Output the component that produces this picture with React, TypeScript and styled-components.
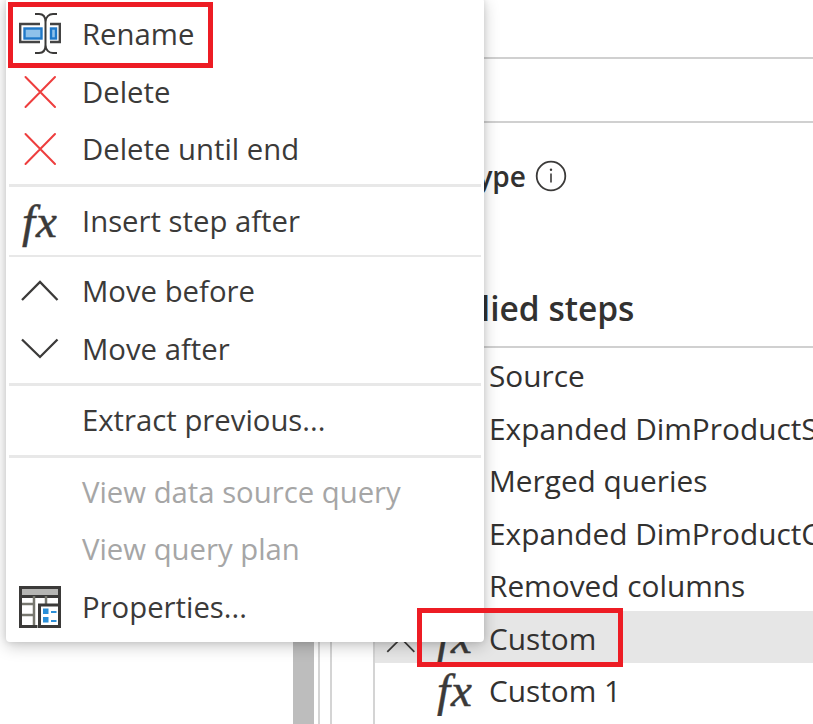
import React from "react";
import styled, { createGlobalStyle } from "styled-components";

const Global = createGlobalStyle`
  html, body { margin: 0; padding: 0; background: #fff; overflow: hidden; }
  body { font-family: "Open Sans", "Noto Sans", "Liberation Sans", sans-serif; }
`;
const Page = styled.div`
  position: relative;
  width: 813px;
  height: 724px;
  overflow: hidden;
  display: flex;
  background: #fff;
`;
const LeftSpace = styled.div`width: 293px; flex: none;`;
const Scrollbar = styled.div`width: 21px; flex: none; background: #bdbdbd;`;
const Rail = styled.div`
  width: 10px;
  flex: none;
  margin-left: 4px;
  border-left: 2px solid #d4d4d4;
  border-right: 2px solid #d4d4d4;
`;
const Settings = styled.div`
  flex: 1;
  min-width: 0;
  margin-left: 41px;
  border-left: 2px solid #d4d4d4;
  display: flex;
  flex-direction: column;
`;
const Band = styled.div<{ $h: number }>`
  height: ${p => p.$h}px;
  flex: none;
  box-sizing: border-box;
  border-bottom: 2px solid #d0d0d0;
`;
const TypeBand = styled.div`
  height: 225px;
  flex: none;
  box-sizing: border-box;
  border-bottom: 2px solid #d0d0d0;
  padding-left: 1px;
  color: #323130;
`;
const TypeLine = styled.div`
  display: flex;
  align-items: center;
  gap: 9px;
  height: 32px;
  margin-top: 37px;
  font-size: 28px;
  font-weight: 600;
`;
const Heading = styled.div`
  margin-top: 96px;
  margin-left: 41px;
  height: 40px;
  line-height: 40px;
  font-size: 33.5px;
  font-weight: 600;
  white-space: nowrap;
`;
const Step = styled.div<{ $selected?: boolean }>`
  height: 52.5px;
  flex: none;
  box-sizing: border-box;
  display: flex;
  align-items: center;
  padding: 3px 0 0 10px;
  background: ${p => (p.$selected ? "#e6e6e6" : "transparent")};
  color: #323130;
  font-size: 29.8px;
  white-space: nowrap;
  overflow: hidden;
`;
const StepChevron = styled.div`width: 32px; flex: none; display: flex; padding-top: 13px;`;
const StepFx = styled.div`
  width: 72px;
  flex: none;
  padding: 0 0 2px 20px;
  box-sizing: border-box;
  font-family: "Liberation Serif", serif;
  font-style: italic;
  font-size: 47px;
  line-height: 42px;
  letter-spacing: 1px;
  -webkit-text-stroke: 0.5px #3b3a39;
  color: #3b3a39;
`;
const Menu = styled.div`
  position: absolute;
  left: 6px;
  top: -2px;
  width: 478px;
  height: 644px;
  box-sizing: border-box;
  padding-top: 7px;
  background: #fff;
  border-radius: 4px;
  box-shadow: 0 4px 16px rgba(0, 0, 0, 0.22), 0 0 6px rgba(0, 0, 0, 0.1);
`;
const Item = styled.div<{ $disabled?: boolean }>`
  height: 57.8px;
  display: flex;
  align-items: center;
  padding-left: 13px;
  color: ${p => (p.$disabled ? "#a6a6a6" : "#3b3a39")};
  font-size: 29.3px;
  white-space: nowrap;
`;
const IconSlot = styled.div`
  width: 42px;
  height: 42px;
  flex: none;
  margin-right: 21px;
  display: flex;
  align-items: center;
  justify-content: center;
`;
const MenuFx = styled.span`
  font-family: "Liberation Serif", serif;
  font-style: italic;
  font-size: 47px;
  line-height: 42px;
  letter-spacing: 1px;
  -webkit-text-stroke: 0.5px #3b3a39;
  color: #3b3a39;
`;
const Divider = styled.div<{ $w?: number }>`
  height: ${p => p.$w ?? 3}px;
  margin: ${p => (p.$w ? 5 : 5.2)}px 3px ${p => (p.$w ? 6 : 5.2)}px 3px;
  background: #e8e8e8;
`;
const Highlight = styled.div<{ $l: number; $t: number; $w: number; $h: number }>`
  position: absolute;
  left: ${p => p.$l}px;
  top: ${p => p.$t}px;
  width: ${p => p.$w}px;
  height: ${p => p.$h}px;
  box-sizing: border-box;
  border: 5px solid #ed1c24;
`;

const RenameIcon = () => (
  <svg width="42" height="42" viewBox="0 0 42 42" fill="none">
    <path d="M21 11H1.200v18H21" stroke="#444" strokeWidth="2.400" />
    <path d="M31 11h9.800v18H31" stroke="#444" strokeWidth="2.400" />
    <rect x="5.500" y="15.500" width="17" height="10" fill="#8ec1ea" stroke="#1f78c8" strokeWidth="2.400" />
    <rect x="32" y="15.500" width="5" height="10" fill="#8ec1ea" stroke="#1f78c8" strokeWidth="2.400" />
    <path d="M16 1h4c4 0 6.500 3 6.500 8v23c0 5-2.500 8-6.500 8h-4M38 1h-4c-4 0-7.500 3-7.500 8M26.500 32c0 5 3.500 8 7.500 8h4" stroke="#3b3a39" strokeWidth="2" />
  </svg>
);
const CrossIcon = () => (
  <svg width="42" height="42" viewBox="0 0 42 42" fill="none">
    <path d="M6.500 6 36 36M36 6 6.500 36" stroke="#ee3e3e" strokeWidth="2" strokeLinecap="round" />
  </svg>
);
const ChevronIcon = ({ down, size = 42 }: { down?: boolean; size?: number }) => (
  <svg width={size} height={size} viewBox="0 0 42 42" fill="none">
    <path d={down ? "M3 11.500 21 29 38.500 11.500" : "M3 30 21 12 38.500 30"} stroke="#3b3a39" strokeWidth="2.300" />
  </svg>
);
const PropertiesIcon = () => (
  <svg width="42" height="42" viewBox="0 0 42 42" fill="none">
    <rect x="1.500" y="1.500" width="39" height="9" fill="#b5b5b3" stroke="#3b3a39" strokeWidth="3" />
    <path d="M1.500 18h14M1.500 29h14M15 10v31M27 10v8" stroke="#77776f" strokeWidth="2.500" />
    <path d="M1.500 10v30.500h17M40.500 10v8" stroke="#3b3a39" strokeWidth="3" />
    <rect x="20.500" y="19" width="20" height="21.500" fill="#fff" stroke="#3b3a39" strokeWidth="3" />
    <rect x="24" y="22.500" width="5.500" height="5.500" fill="#2b8fd8" />
    <rect x="24" y="31" width="5.500" height="5.500" fill="#2b8fd8" />
    <rect x="32" y="25" width="5.500" height="2" fill="#2b8fd8" />
    <rect x="32" y="34" width="5.500" height="2" fill="#2b8fd8" />
  </svg>
);
const InfoIcon = () => (
  <svg width="32" height="32" viewBox="0 0 32 32" fill="none">
    <circle cx="16" cy="16" r="14.300" stroke="#3b3a39" strokeWidth="1.800" />
    <path d="M16 13.500v9" stroke="#3b3a39" strokeWidth="1.600" />
    <circle cx="16" cy="9.800" r="1.200" fill="#3b3a39" />
  </svg>
);

const steps = [
  "Source",
  "Expanded DimProductSubcategory",
  "Merged queries",
  "Expanded DimProductCategory",
  "Removed columns",
];

export default function App() {
  return (
    <Page>
      <Global />
      <LeftSpace />
      <Scrollbar />
      <Rail />
      <Settings>
        <Band $h={59} />
        <Band $h={64} />
        <TypeBand>
          <TypeLine>
            Query type <InfoIcon />
          </TypeLine>
          <Heading>Applied steps</Heading>
        </TypeBand>
        {steps.map(s => (
          <Step key={s}>
            <StepChevron />
            <StepFx />
            {s}
          </Step>
        ))}
        <Step $selected>
          <StepChevron><ChevronIcon size={32} /></StepChevron>
          <StepFx>fx</StepFx>
          Custom
        </Step>
        <Step>
          <StepChevron />
          <StepFx>fx</StepFx>
          Custom 1
        </Step>
      </Settings>
      <Menu>
        <Item><IconSlot><RenameIcon /></IconSlot>Rename</Item>
        <Item><IconSlot><CrossIcon /></IconSlot>Delete</Item>
        <Item><IconSlot><CrossIcon /></IconSlot>Delete until end</Item>
        <Divider />
        <Item><IconSlot><MenuFx>fx</MenuFx></IconSlot>Insert step after</Item>
        <Divider $w={2} />
        <Item><IconSlot><ChevronIcon /></IconSlot>Move before</Item>
        <Item><IconSlot><ChevronIcon down /></IconSlot>Move after</Item>
        <Divider />
        <Item><IconSlot />Extract previous...</Item>
        <Divider />
        <Item $disabled><IconSlot />View data source query</Item>
        <Item $disabled><IconSlot />View query plan</Item>
        <Item><IconSlot><PropertiesIcon /></IconSlot>Properties...</Item>
      </Menu>
      <Highlight $l={8} $t={2} $w={205} $h={66} />
      <Highlight $l={417} $t={608} $w={206} $h={59} />
    </Page>
  );
}
